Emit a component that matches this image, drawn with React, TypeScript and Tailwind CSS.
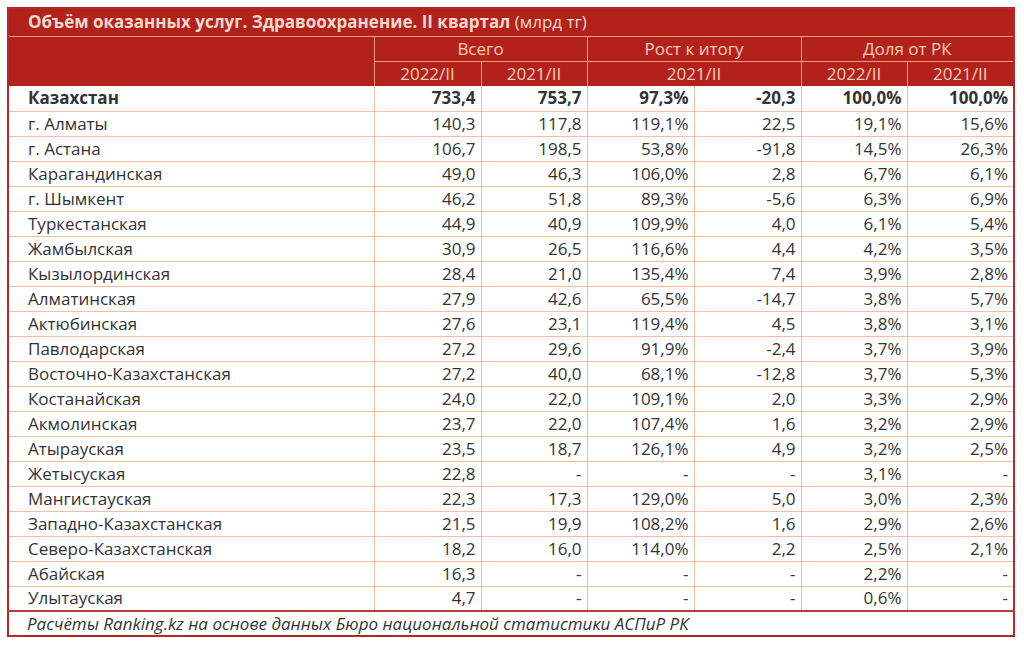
import React from 'react';

type Row = [string, string, string, string, string, string, string];

const rows: Row[] = [
  ['Казахстан', '733,4', '753,7', '97,3%', '-20,3', '100,0%', '100,0%'],
  ['г. Алматы', '140,3', '117,8', '119,1%', '22,5', '19,1%', '15,6%'],
  ['г. Астана', '106,7', '198,5', '53,8%', '-91,8', '14,5%', '26,3%'],
  ['Карагандинская', '49,0', '46,3', '106,0%', '2,8', '6,7%', '6,1%'],
  ['г. Шымкент', '46,2', '51,8', '89,3%', '-5,6', '6,3%', '6,9%'],
  ['Туркестанская', '44,9', '40,9', '109,9%', '4,0', '6,1%', '5,4%'],
  ['Жамбылская', '30,9', '26,5', '116,6%', '4,4', '4,2%', '3,5%'],
  ['Кызылординская', '28,4', '21,0', '135,4%', '7,4', '3,9%', '2,8%'],
  ['Алматинская', '27,9', '42,6', '65,5%', '-14,7', '3,8%', '5,7%'],
  ['Актюбинская', '27,6', '23,1', '119,4%', '4,5', '3,8%', '3,1%'],
  ['Павлодарская', '27,2', '29,6', '91,9%', '-2,4', '3,7%', '3,9%'],
  ['Восточно-Казахстанская', '27,2', '40,0', '68,1%', '-12,8', '3,7%', '5,3%'],
  ['Костанайская', '24,0', '22,0', '109,1%', '2,0', '3,3%', '2,9%'],
  ['Акмолинская', '23,7', '22,0', '107,4%', '1,6', '3,2%', '2,9%'],
  ['Атырауская', '23,5', '18,7', '126,1%', '4,9', '3,2%', '2,5%'],
  ['Жетысуская', '22,8', '-', '-', '-', '3,1%', '-'],
  ['Мангистауская', '22,3', '17,3', '129,0%', '5,0', '3,0%', '2,3%'],
  ['Западно-Казахстанская', '21,5', '19,9', '108,2%', '1,6', '2,9%', '2,6%'],
  ['Северо-Казахстанская', '18,2', '16,0', '114,0%', '2,2', '2,5%', '2,1%'],
  ['Абайская', '16,3', '-', '-', '-', '2,2%', '-'],
  ['Улытауская', '4,7', '-', '-', '-', '0,6%', '-'],
];

export default function App() {
  return (
    <div
      className="h-[650px] w-[1024px] bg-white pl-[7px] pt-[7px]"
      style={{ fontFamily: '"Open Sans", "Liberation Sans", sans-serif' }}
    >
      <table className="w-[1006px] table-fixed border-collapse border-2 border-[#b3262a] text-[17px] leading-[20px] text-[#333333]">
        <colgroup>
          <col className="w-[366px]" />
          <col className="w-[107px]" />
          <col className="w-[106px]" />
          <col className="w-[107px]" />
          <col className="w-[107px]" />
          <col className="w-[106px]" />
          <col className="w-[107px]" />
        </colgroup>
        <thead className="bg-[#b2221b] font-normal text-[#f9cdbd]">
          <tr className="h-[28px]">
            <th
              colSpan={7}
              className="border-b border-[#ee9a85] pl-[19px] text-left font-normal text-[#f7d9cf]"
            >
              <span className="font-bold">Объём оказанных услуг. Здравоохранение. II квартал</span> (млрд тг)
            </th>
          </tr>
          <tr className="h-[25px]">
            <th className="border-r border-[#ee9a85]"></th>
            <th colSpan={2} className="border-b border-r border-[#ee9a85] font-normal">
              Всего
            </th>
            <th colSpan={2} className="border-b border-r border-[#ee9a85] font-normal">
              Рост к итогу
            </th>
            <th colSpan={2} className="border-b border-[#ee9a85] font-normal">
              Доля от РК
            </th>
          </tr>
          <tr className="h-[25px]">
            <th className="border-r border-[#ee9a85]"></th>
            <th className="border-r border-[#ee9a85] font-normal">2022/II</th>
            <th className="border-r border-[#ee9a85] font-normal">2021/II</th>
            <th colSpan={2} className="border-r border-[#ee9a85] font-normal">
              2021/II
            </th>
            <th className="border-r border-[#ee9a85] font-normal">2022/II</th>
            <th className="font-normal">2021/II</th>
          </tr>
        </thead>
        <tbody>
          {rows.map((r, i) => (
            <tr key={r[0]} className={`h-[25px] ${i === 0 ? 'font-bold' : ''}`}>
              <td className="border-b border-r border-[#f3bfa4] pl-[19px]">{r[0]}</td>
              {r.slice(1).map((v, j) => (
                <td
                  key={j}
                  className="border-b border-r border-[#f3bfa4] pr-[5px] text-right last:border-r-0"
                >
                  {v}
                </td>
              ))}
            </tr>
          ))}
          <tr className="h-[25px]">
            <td colSpan={7} className="border-t-2 border-[#c0393a] pl-[18px] italic">
              Расчёты Ranking.kz на основе данных Бюро национальной статистики АСПиР РК
            </td>
          </tr>
        </tbody>
      </table>
    </div>
  );
}
